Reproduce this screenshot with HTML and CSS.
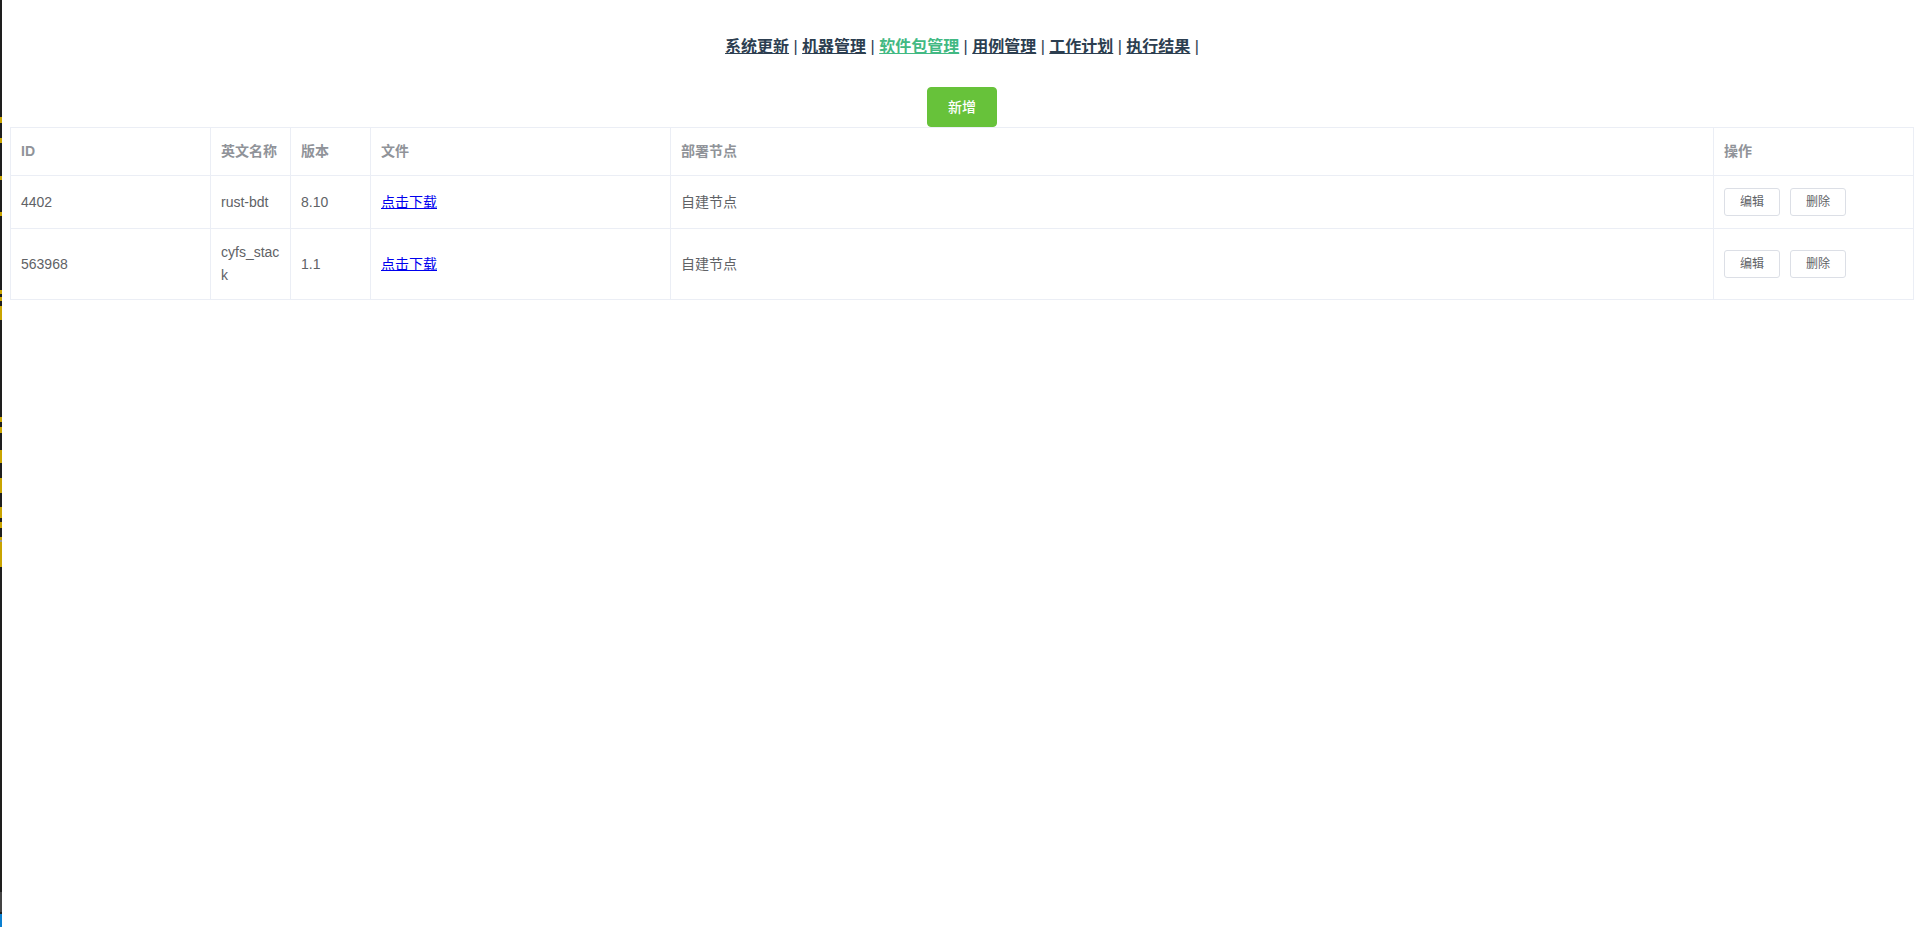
FILE: index.html
```html
<!DOCTYPE html>
<html lang="zh-CN">
<head>
<meta charset="utf-8">
<title>软件包管理</title>
<link rel="stylesheet" href="styles.css">
</head>
<body>
<div class="edge">
  <svg width="2" height="927" viewBox="0 0 2 927">
    <rect x="0" y="0" width="2" height="927" fill="#1e1e1e"/>
    <rect x="0" y="117" width="2" height="6" fill="#c9a400"/>
    <rect x="0" y="138" width="2" height="5" fill="#c9a400"/>
    <rect x="0" y="176" width="2" height="4" fill="#c9a400"/>
    <rect x="0" y="212" width="2" height="4" fill="#c9a400"/>
    <rect x="0" y="290" width="2" height="4" fill="#c9a400"/>
    <rect x="0" y="297" width="2" height="4" fill="#c9a400"/>
    <rect x="0" y="306" width="2" height="14" fill="#c9a400"/>
    <rect x="0" y="417" width="2" height="5" fill="#c9a400"/>
    <rect x="0" y="427" width="2" height="6" fill="#c9a400"/>
    <rect x="0" y="450" width="2" height="13" fill="#c9a400"/>
    <rect x="0" y="478" width="2" height="15" fill="#c9a400"/>
    <rect x="0" y="507" width="2" height="11" fill="#c9a400"/>
    <rect x="0" y="522" width="2" height="6" fill="#c9a400"/>
    <rect x="0" y="537" width="2" height="30" fill="#c9a400"/>
    <rect x="0" y="540" width="2" height="2" fill="#9a9a9a"/>
    <rect x="0" y="892" width="2" height="20" fill="#444444"/>
    <rect x="0" y="914" width="2" height="13" fill="#0a7fd0"/>
  </svg>
</div>
<div class="page">
  <nav class="nav">
    <a class="nav-link" href="#">系统更新</a> |
    <a class="nav-link" href="#">机器管理</a> |
    <a class="nav-link active" href="#">软件包管理</a> |
    <a class="nav-link" href="#">用例管理</a> |
    <a class="nav-link" href="#">工作计划</a> |
    <a class="nav-link" href="#">执行结果</a> |
  </nav>
  <div class="toolbar">
    <button class="btn-add" type="button">新增</button>
  </div>
  <div class="table">
    <div class="row head">
      <div class="cell">ID</div>
      <div class="cell">英文名称</div>
      <div class="cell">版本</div>
      <div class="cell">文件</div>
      <div class="cell">部署节点</div>
      <div class="cell">操作</div>
    </div>
    <div class="row">
      <div class="cell">4402</div>
      <div class="cell">rust-bdt</div>
      <div class="cell">8.10</div>
      <div class="cell"><a class="dl" href="#">点击下载</a></div>
      <div class="cell">自建节点</div>
      <div class="cell actions">
        <button class="btn-mini" type="button">编辑</button>
        <button class="btn-mini" type="button">删除</button>
      </div>
    </div>
    <div class="row">
      <div class="cell">563968</div>
      <div class="cell">cyfs_stack</div>
      <div class="cell">1.1</div>
      <div class="cell"><a class="dl" href="#">点击下载</a></div>
      <div class="cell">自建节点</div>
      <div class="cell actions">
        <button class="btn-mini" type="button">编辑</button>
        <button class="btn-mini" type="button">删除</button>
      </div>
    </div>
  </div>
</div>
</body>
</html>
```
FILE: styles.css
```css
* { box-sizing: border-box; }
html, body { margin: 0; padding: 0; background: #ffffff; }
body {
  display: flex;
  align-items: flex-start;
  font-family: "Liberation Sans", "Noto Sans CJK SC", sans-serif;
  min-height: 927px;
}
.edge {
  width: 2px;
  flex: 0 0 2px;
  height: 927px;
  overflow: hidden;
}
.edge svg { display: block; }
.page {
  flex: 1;
  margin-left: 8px;
  margin-right: 3px;
  min-width: 0;
}
.nav {
  padding: 36px 0 29px;
  text-align: center;
  font-size: 16px;
  line-height: 22px;
  color: #2c3e50;
}
.nav-link {
  color: #2c3e50;
  font-weight: bold;
  text-decoration: underline;
}
.nav-link.active { color: #42b983; }
.toolbar {
  display: flex;
  justify-content: center;
}
.btn-add {
  width: 70px;
  height: 40px;
  padding: 0;
  border: 1px solid #67c23a;
  border-radius: 4px;
  background: #67c23a;
  color: #ffffff;
  font-family: "Liberation Sans", "Noto Sans CJK SC", sans-serif;
  font-size: 14px;
  font-weight: 500;
  line-height: 1;
}
.table {
  border-left: 1px solid #ebeef5;
  border-top: 1px solid #ebeef5;
  font-size: 14px;
  color: #606266;
}
.row {
  display: grid;
  grid-template-columns: 200px 80px 80px 300px 1fr 200px;
}
.cell {
  display: flex;
  align-items: center;
  padding: 12px 10px;
  line-height: 23px;
  border-right: 1px solid #ebeef5;
  border-bottom: 1px solid #ebeef5;
  word-break: break-all;
  min-width: 0;
}
.head .cell {
  color: #909399;
  font-weight: bold;
}
.dl {
  color: #0000ee;
  text-decoration: underline;
}
.actions { gap: 10px; }
.btn-mini {
  width: 56px;
  height: 28px;
  padding: 0;
  border: 1px solid #dcdfe6;
  border-radius: 3px;
  background: #ffffff;
  color: #606266;
  font-family: "Liberation Sans", "Noto Sans CJK SC", sans-serif;
  font-size: 12px;
  line-height: 1;
}
```
